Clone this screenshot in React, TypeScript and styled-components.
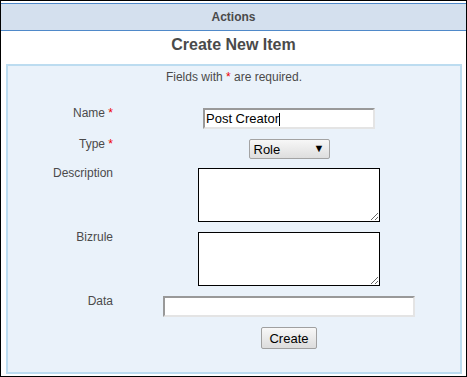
import React from "react";
import styled, { createGlobalStyle } from "styled-components";

const Global = createGlobalStyle`
  html, body { margin: 0; padding: 0; background: #fff; }
  body { font-family: "Liberation Sans", Arial, sans-serif; }
  * { box-sizing: border-box; }
`;

const Frame = styled.div`
  width: 467px;
  height: 377px;
  border: 1px solid #000;
  display: flex;
  flex-direction: column;
  background: #fff;
`;

const Header = styled.div`
  margin-top: 2px;
  border-top: 1px solid #4f89c9;
  border-bottom: 1px solid #4f89c9;
  background: #d4e0ee;
  height: 28px;
  line-height: 26px;
  text-align: center;
  font-size: 12px;
  font-weight: bold;
  color: #4a4a4a;
`;

const Title = styled.h1`
  margin: 0;
  padding: 5px 0 10px;
  font-size: 16px;
  line-height: 18px;
  font-weight: bold;
  text-align: center;
  color: #4a4a4a;
`;

const Panel = styled.form`
  flex: 1;
  margin: 0 4px 2px 5px;
  border: 2px solid #bcdcf0;
  background: #eaf2fa;
  padding: 4px 0 0;
`;

const Note = styled.p`
  margin: 0 0 24px;
  font-size: 12px;
  line-height: 14px;
  text-align: center;
  color: #4a4a4a;
`;

const Req = styled.span`
  color: #e00;
`;

const Grid = styled.div`
  display: grid;
  grid-template-columns: 110px 1fr;
  row-gap: 10px;
  align-items: start;
`;

const Label = styled.label`
  display: block;
  margin-top: -2px;
  padding-right: 5px;
  text-align: right;
  font-size: 12px;
  line-height: 14px;
  color: #4a4a4a;
`;

const Field = styled.div`
  display: flex;
  justify-content: center;
`;

const InputWrap = styled.div`
  position: relative;
`;

const TextInput = styled.input<{ $w: number }>`
  width: ${(p) => p.$w}px;
  height: 21px;
  margin: 0;
  padding: 0 1px;
  border-width: 2px;
  border-style: solid;
  border-color: #999 #e4e4e4 #e4e4e4 #999;
  background: #fff;
  font-family: "Liberation Sans", Arial, sans-serif;
  font-size: 13px;
  color: #000;
  outline: none;
  display: block;
`;

const Caret = styled.span`
  position: absolute;
  left: 76px;
  top: 5px;
  width: 1px;
  height: 13px;
  background: #000;
`;

const SelectWrap = styled.div`
  position: relative;
  width: 81px;
  height: 20px;
  margin-bottom: -1px;
`;

const Select = styled.select`
  appearance: none;
  -webkit-appearance: none;
  width: 81px;
  height: 20px;
  margin: 0;
  padding: 0 0 0 4px;
  border: 1px solid #a3a3a3;
  border-radius: 2px;
  background: linear-gradient(#f7f7f7, #dedede);
  font-family: "Liberation Sans", Arial, sans-serif;
  font-size: 13px;
  color: #000;
  outline: none;
  display: block;
`;

const Arrow = styled.span`
  position: absolute;
  right: 5px;
  top: 3px;
  font-size: 11px;
  line-height: 13px;
  color: #000;
  pointer-events: none;
`;

const Area = styled.textarea`
  width: 182px;
  height: 54px;
  margin: 0;
  border: 1px solid #000;
  background: #fff;
  display: block;
  outline: none;
`;

const Button = styled.button`
  width: 56px;
  height: 22px;
  margin: 0;
  padding: 0;
  border: 1px solid #a0a0a0;
  border-radius: 2px;
  background: linear-gradient(#f8f8f8, #dcdcdc);
  font-family: "Liberation Sans", Arial, sans-serif;
  font-size: 13px;
  color: #000;
`;

export default function App() {
  return (
    <>
      <Global />
      <Frame>
        <Header>Actions</Header>
        <Title>Create New Item</Title>
        <Panel onSubmit={(e) => e.preventDefault()}>
          <Note>
            Fields with <Req>*</Req> are required.
          </Note>
          <Grid>
            <Label>
              Name <Req>*</Req>
            </Label>
            <Field>
              <InputWrap>
                <TextInput $w={172} defaultValue="Post Creator" />
                <Caret />
              </InputWrap>
            </Field>

            <Label>
              Type <Req>*</Req>
            </Label>
            <Field>
              <SelectWrap>
                <Select defaultValue="role">
                  <option value="role">Role</option>
                  <option value="task">Task</option>
                  <option value="operation">Operation</option>
                </Select>
                <Arrow>▼</Arrow>
              </SelectWrap>
            </Field>

            <Label>Description</Label>
            <Field>
              <Area />
            </Field>

            <Label>Bizrule</Label>
            <Field>
              <Area />
            </Field>

            <Label>Data</Label>
            <Field>
              <TextInput $w={252} />
            </Field>

            <span />
            <Field>
              <Button type="submit">Create</Button>
            </Field>
          </Grid>
        </Panel>
      </Frame>
    </>
  );
}
